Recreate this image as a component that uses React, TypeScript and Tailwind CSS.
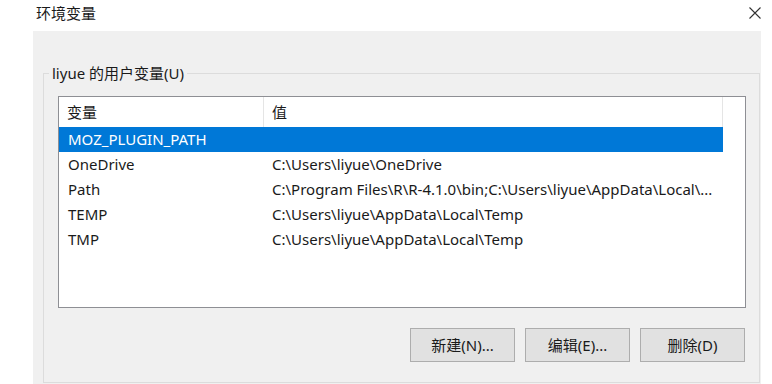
import React from 'react';

const rows = [
  { name: 'MOZ_PLUGIN_PATH', value: '', selected: true },
  { name: 'OneDrive', value: 'C:\\Users\\liyue\\OneDrive' },
  { name: 'Path', value: 'C:\\Program Files\\R\\R-4.1.0\\bin;C:\\Users\\liyue\\AppData\\Local\\...' },
  { name: 'TEMP', value: 'C:\\Users\\liyue\\AppData\\Local\\Temp' },
  { name: 'TMP', value: 'C:\\Users\\liyue\\AppData\\Local\\Temp' },
];

export default function App() {
  return (
    <div className="w-[772px] h-[384px] bg-white overflow-hidden text-[#1a1a1a] text-[15px] font-['Noto_Sans','Noto_Sans_CJK_SC',sans-serif]">
      {/* Title bar */}
      <div className="flex justify-between h-[31px]">
        <span className="pl-[36px] pt-[4px] leading-[18px]">环境变量</span>
        <svg className="mt-[7px] mr-[11px]" width="12" height="12" viewBox="0 0 12 12">
          <path d="M0.5 0.5 L11.5 11.5 M11.5 0.5 L0.5 11.5" stroke="#333" strokeWidth="1.1" fill="none" />
        </svg>
      </div>

      {/* Dialog body */}
      <div className="ml-[33px] w-[728px] h-[353px] bg-[#f0f0f0] pt-[42px] pl-[10px]">
        <div className="relative w-[717px] h-[310px] border border-[#dcdcdc] pt-[22px] pl-[14px]">
          <span className="absolute left-[5px] top-[-10px] px-[3px] bg-[#f0f0f0] leading-[18px]">
            liyue 的用户变量(U)
          </span>

          {/* List view */}
          <div className="w-[688px] h-[212px] border border-[#8e8f94] bg-white">
            <div className="flex h-[30px] items-center">
              <div className="w-[205px] h-full flex items-center pl-[8px] border-r border-[#e5e5e5]">变量</div>
              <div className="w-[459px] h-full flex items-center pl-[8px] border-r border-[#e5e5e5]">值</div>
            </div>
            {rows.map((row) => (
              <div
                key={row.name}
                className={`flex w-[664px] h-[25px] items-center ${row.selected ? 'bg-[#0078d7] text-white' : ''}`}
              >
                <div className="w-[205px] pl-[9px] whitespace-nowrap">{row.name}</div>
                <div className="flex-1 pl-[8px] whitespace-nowrap overflow-hidden">{row.value}</div>
              </div>
            ))}
          </div>

          {/* Buttons */}
          <div className="w-[688px] mt-[20px] pr-[1px] flex justify-end gap-[10px]">
            {['新建(N)...', '编辑(E)...', '删除(D)'].map((label) => (
              <button
                key={label}
                className="w-[105px] h-[34px] bg-[#e1e1e1] border border-[#adadad] leading-none"
              >
                {label}
              </button>
            ))}
          </div>
        </div>
      </div>
    </div>
  );
}
